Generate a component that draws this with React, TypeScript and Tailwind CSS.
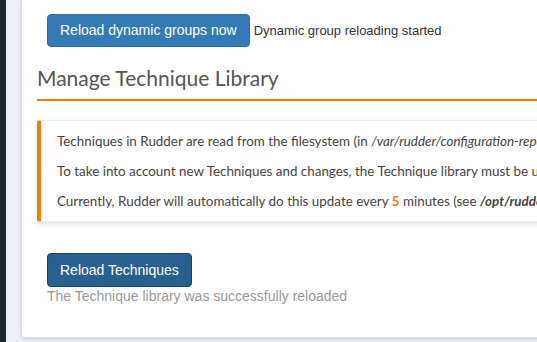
import React from "react";

const body = "font-['Lato','Noto_Sans',sans-serif]";
const arial = "font-['Liberation_Sans',Arial,sans-serif]";

export default function App() {
  return (
    <div className="flex h-[342px] w-[537px] overflow-hidden bg-[#ecf0f5]">
      <div className="w-[6px] shrink-0 bg-[#1f2a30]" />
      <div className="min-w-0 flex-1 pl-[15px]">
        <div className="h-[338px] w-[560px] rounded-b-[4px] border border-t-0 border-[#dde1e6] bg-white pl-[15px] shadow-[0_1px_3px_rgba(0,0,0,0.15)]">
          <div className={`flex items-center pl-[10px] pt-[14px] ${arial}`}>
            <button className="h-[33px] rounded-[4px] border border-[#2e6da4] bg-[#337ab7] px-[12px] text-[14px] text-white">
              Reload dynamic groups now
            </button>
            <span className="ml-[4px] text-[13px] text-[#333]">Dynamic group reloading started</span>
          </div>
          <h2 className={`mt-[17px] border-b-2 border-[#f08004] pb-[7px] text-[21px] leading-[28px] text-[#555] ${body}`}>
            Manage Technique Library
          </h2>
          <Callout />
          <div className={`pl-[10px] pt-[31px] ${arial}`}>
            <button className="h-[34px] rounded-[4px] border border-[#1c3f5e] bg-[#286090] px-[12px] text-[14px] text-white">
              Reload Techniques
            </button>
            <div className="-mt-[1px] text-[14px] text-[#999]">The Technique library was successfully reloaded</div>
          </div>
        </div>
      </div>
    </div>
  );
}

function Callout() {
  return (
    <div
      className={`mt-[19px] h-[102px] whitespace-nowrap rounded-[3px] border border-l-4 border-[#eee] border-l-[#f08004] pl-[16px] pt-[10px] text-[13.4px] leading-[20px] text-[#444] shadow-[0_2px_5px_rgba(0,0,0,0.12)] ${body}`}
    >
      <p>
        Techniques in Rudder are read from the filesystem (in <i>/var/rudder/configuration-repository/techniques</i>).
      </p>
      <p className="mt-[10px]">
        To take into account new Techniques and changes, the Technique library must be updated.
      </p>
      <p className="mt-[10px]">
        Currently, Rudder will automatically do this update every <b className="text-[#f08004]">5</b> minutes (see{" "}
        <b><i>/opt/rudder/etc/rudder-web.properties</i></b>).
      </p>
    </div>
  );
}
